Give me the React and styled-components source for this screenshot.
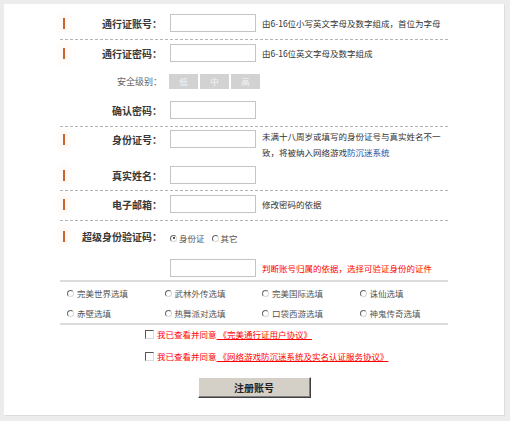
import React from 'react';
import styled, { createGlobalStyle } from 'styled-components';

const GlobalStyle = createGlobalStyle`
  html, body { margin: 0; padding: 0; background: #ececec; }
  body {
    font-family: "Noto Sans CJK SC", "Noto Sans", sans-serif;
    font-size: 9px;
    color: #333;
  }
  * { box-sizing: border-box; }
`;

const Page = styled.div`
  width: 510px;
  height: 421px;
  padding: 4px 6px 6px 4px;
`;

const Panel = styled.div`
  height: 100%;
  background: #fff;
  padding-left: 56px;
  box-shadow: 1px 1px 0 #dcdcdc;
`;

const Form = styled.div`
  width: 388px;
  padding-top: 2px;
`;

const lines = {
  dash: '1px dashed #b4b4b4',
  solid: '2px solid #dcdcdc',
};

const Row = styled.div`
  display: grid;
  grid-template-columns: 102px 86px 1fr;
  column-gap: 8px;
  align-items: start;
  height: ${(p) => p.$h}px;
  padding-top: ${(p) => p.$pt}px;
  border-bottom: ${(p) => lines[p.$line] || 'none'};
`;

const LabelCell = styled.div`
  height: 18px;
  display: flex;
  align-items: center;
`;

const Marker = styled.span`
  width: 2px;
  height: 11px;
  margin-left: 3px;
  background: #c9652c;
  box-shadow: 0 0 6px 4px rgba(253, 232, 214, 0.3);
`;

const LabelText = styled.span`
  margin-left: auto;
  white-space: nowrap;
  font-size: ${(p) => (p.$plain ? '9px' : '10px')};
  font-weight: ${(p) => (p.$plain ? 'normal' : 'bold')};
  color: ${(p) => (p.$plain ? '#666' : '#383838')};
`;

const Input = styled.input`
  width: 86px;
  height: 18px;
  margin: 0;
  padding: 0 3px;
  border: 1px solid #c4c4c4;
  background: #fff;
  font-size: 9px;
  outline: none;
`;

const Hint = styled.div`
  margin-left: -2px;
  white-space: nowrap;
  font-size: 8.5px;
  line-height: ${(p) => (p.$tall ? '16px' : '18px')};
  margin-top: ${(p) => (p.$tall ? '-2px' : '0')};
  color: ${(p) => (p.$red ? '#f00' : '#333')};
`;

const Blue = styled.span`
  color: #2450a8;
`;

const Wide = styled.div`
  grid-column: 2 / span 2;
  height: 18px;
  display: flex;
  align-items: center;
  margin-left: ${(p) => p.$shift || 0}px;
  margin-top: ${(p) => p.$top || 0}px;
  gap: ${(p) => p.$gap || 0}px;
`;

const Level = styled.span`
  width: 29px;
  height: 15px;
  background: #d2d2d2;
  color: #f4f4f4;
  font-size: 8.5px;
  display: flex;
  align-items: center;
  justify-content: center;
`;

const Radio = styled.span`
  position: relative;
  flex: none;
  width: ${(p) => p.$size || 7}px;
  height: ${(p) => p.$size || 7}px;
  border-radius: 50%;
  border: 1px solid;
  border-color: #666 #d8d8d8 #d8d8d8 #666;
  background: #fff;

  &::after {
    content: '';
    display: ${(p) => (p.$checked ? 'block' : 'none')};
    position: absolute;
    left: 1.5px;
    top: 1.5px;
    width: 2px;
    height: 2px;
    border-radius: 50%;
    background: #222;
  }
`;

const RadioText = styled.span`
  font-size: 8.5px;
  color: #555;
  margin: 0 ${(p) => p.$after || 0}px 0 2px;
`;

const ChoiceGrid = styled.div`
  display: grid;
  grid-template-columns: repeat(4, 97.5px);
  grid-auto-rows: 20px;
  height: 43px;
  padding: 1px 0 0 7px;
  border-bottom: 2px solid #dcdcdc;
`;

const Choice = styled.label`
  display: flex;
  align-items: center;
  gap: 1px;
`;

const Agree = styled.div`
  padding-left: 85px;
  display: flex;
  flex-direction: column;
  gap: 4px;
`;

const AgreeRow = styled.div`
  height: 18px;
  display: flex;
  align-items: center;
  gap: 3px;
  font-size: 8.5px;
  color: #f00;
  white-space: nowrap;
`;

const Check = styled.span`
  width: 9px;
  height: 9px;
  border: 1px solid;
  border-color: #555 #dcdcdc #dcdcdc #555;
  background: #fff;
`;

const Link = styled.span`
  text-decoration: underline;
`;

const Submit = styled.button`
  display: block;
  width: 113px;
  height: 21px;
  margin: 12px auto 0;
  padding: 0;
  background: #d4d0c8;
  border: 1px solid;
  border-color: #fff #404040 #404040 #fff;
  box-shadow: inset -1px -1px 0 #808080;
  font-family: inherit;
  font-size: 10px;
  font-weight: bold;
  color: #222;
`;

function Field({ label, mark, plain }) {
  return (
    <LabelCell>
      {mark && <Marker />}
      <LabelText $plain={plain}>{label}</LabelText>
    </LabelCell>
  );
}

const games = [
  '完美世界选填', '武林外传选填', '完美国际选填', '诛仙选填',
  '赤壁选填', '热舞派对选填', '口袋西游选填', '神鬼传奇选填',
];

export default function App() {
  return (
    <>
      <GlobalStyle />
      <Page>
        <Panel>
          <Form>
            <Row $h={34} $pt={8} $line="dash">
              <Field label="通行证账号：" mark />
              <Input />
              <Hint>由6-16位小写英文字母及数字组成，首位为字母</Hint>
            </Row>
            <Row $h={25} $pt={4}>
              <Field label="通行证密码：" mark />
              <Input type="password" />
              <Hint>由6-16位英文字母及数字组成</Hint>
            </Row>
            <Row $h={31} $pt={7}>
              <Field label="安全级别：" plain />
              <Wide $shift={-1} $gap={2}>
                <Level>低</Level>
                <Level>中</Level>
                <Level>高</Level>
              </Wide>
            </Row>
            <Row $h={31} $pt={5} $line="dash">
              <Field label="确认密码：" />
              <Input type="password" />
            </Row>
            <Row $h={37} $pt={3}>
              <Field label="身份证号：" mark />
              <Input />
              <Hint $tall>
                未满十八周岁或填写的身份证号与真实姓名不一
                <br />
                致，将被纳入网络游戏<Blue>防沉迷系统</Blue>
              </Hint>
            </Row>
            <Row $h={27} $pt={2} $line="dash">
              <Field label="真实姓名：" mark />
              <Input />
            </Row>
            <Row $h={30} $pt={4} $line="dash">
              <Field label="电子邮箱：" mark />
              <Input />
              <Hint>修改密码的依据</Hint>
            </Row>
            <Row $h={29} $pt={6}>
              <Field label="超级身份验证码：" mark />
              <Wide $top={2}>
                <Radio $checked />
                <RadioText $after={7}>身份证</RadioText>
                <Radio />
                <RadioText>其它</RadioText>
              </Wide>
            </Row>
            <Row $h={32} $pt={9} $line="solid">
              <span />
              <Input />
              <Hint $red>判断账号归属的依据，选择可验证身份的证件</Hint>
            </Row>
            <ChoiceGrid>
              {games.map((g) => (
                <Choice key={g}>
                  <Radio />
                  <RadioText>{g}</RadioText>
                </Choice>
              ))}
            </ChoiceGrid>
            <Agree>
              <AgreeRow>
                <Check />
                <span>
                  我已查看并同意<Link> 《完美通行证用户协议》 </Link>
                </span>
              </AgreeRow>
              <AgreeRow>
                <Check />
                <span>
                  我已查看并同意<Link> 《网络游戏防沉迷系统及实名认证服务协议》 </Link>
                </span>
              </AgreeRow>
            </Agree>
            <Submit>注册账号</Submit>
          </Form>
        </Panel>
      </Page>
    </>
  );
}
